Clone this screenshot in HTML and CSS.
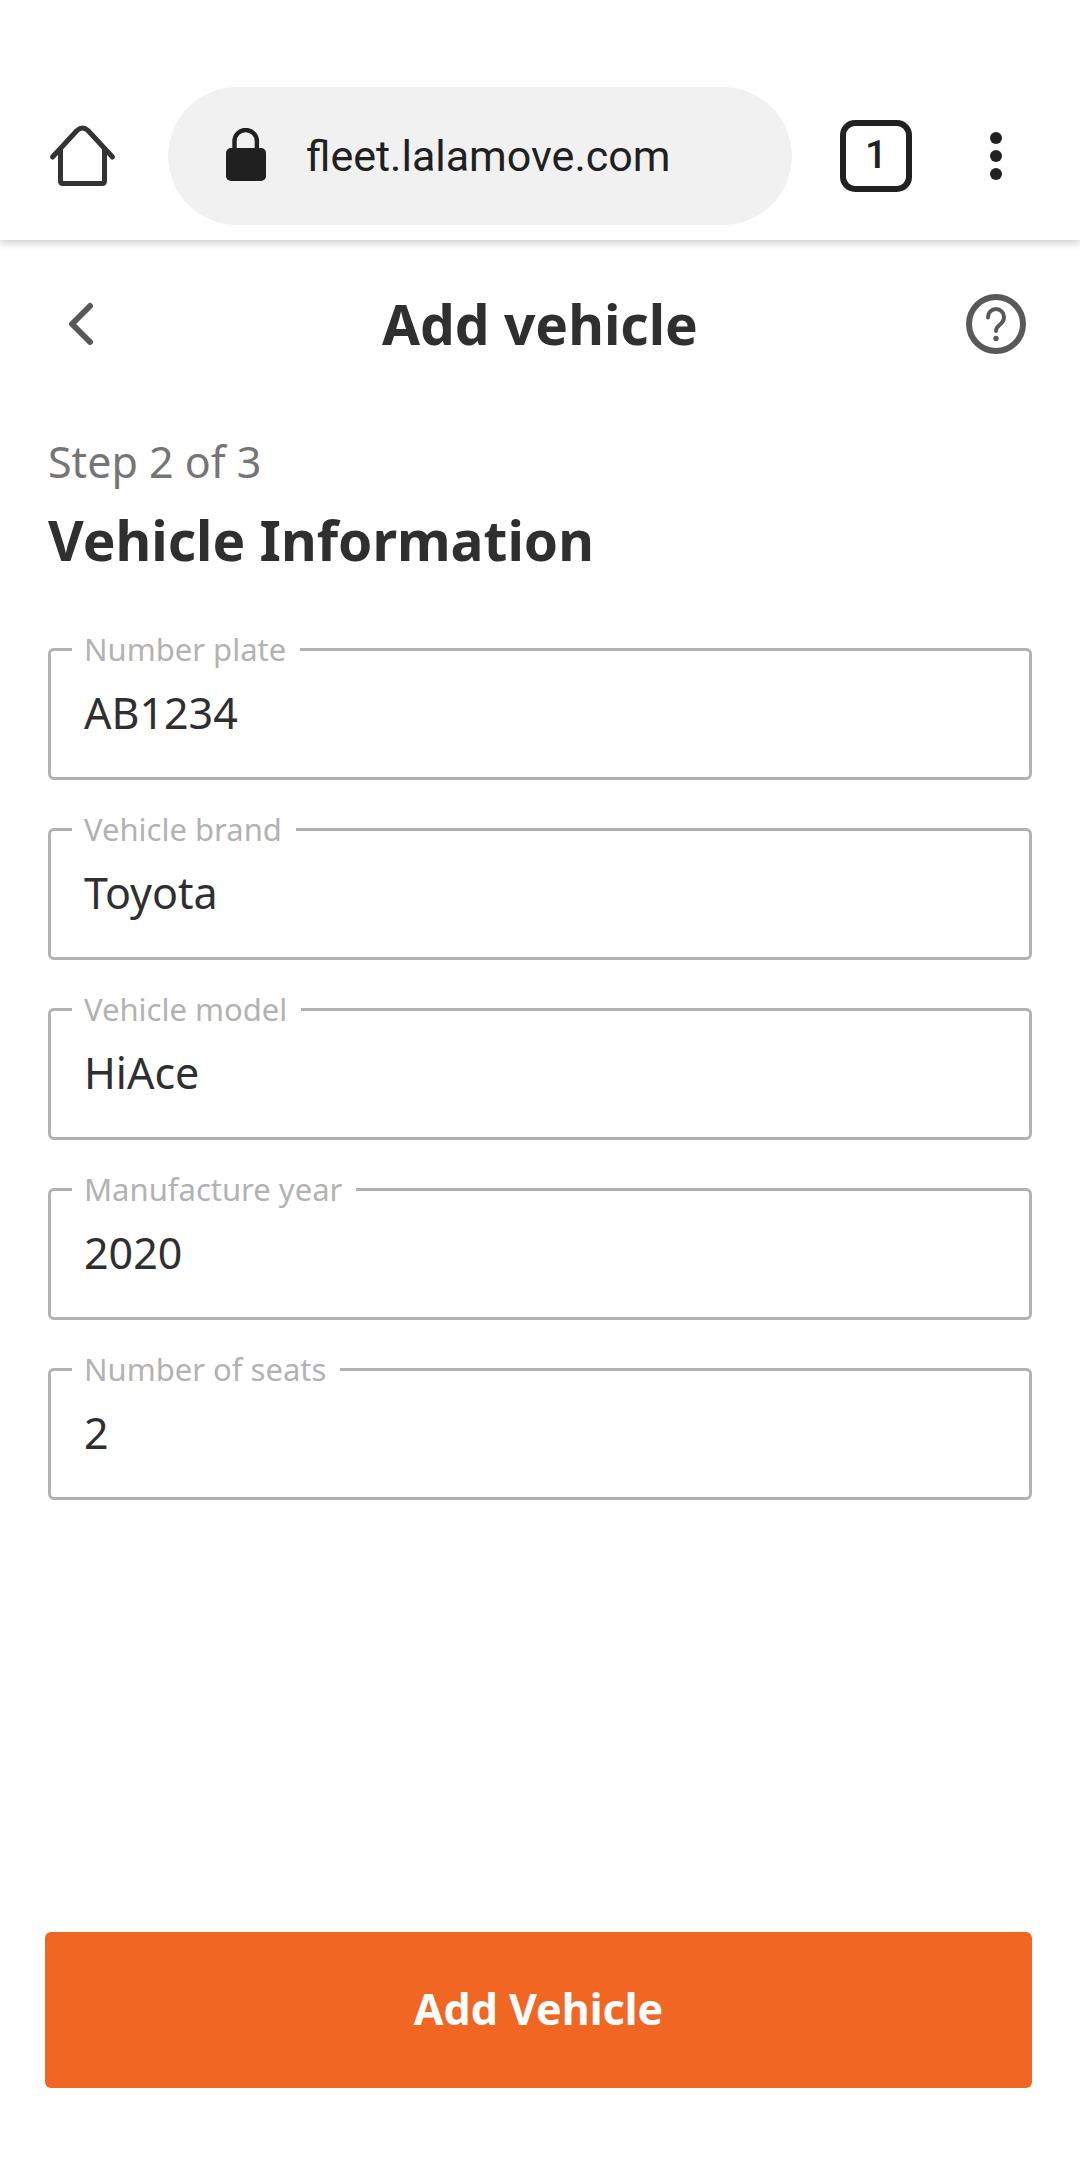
FILE: index.html
```html
<!DOCTYPE html>
<html lang="en">
    <head>
        <meta charset="utf-8">
        <meta name="viewport" content="width=device-width, initial-scale=1">
        <title>Add vehicle</title>
        <link rel="stylesheet" href="styles.css">
    </head>
    <body>
        <div class="page">
            <!-- browser bar -->
            <div class="browser-bar">
                <button type="button" class="icon-btn home-btn" aria-label="Home">
                    <svg width="72" height="72" viewBox="0 0 72 72" fill="none" stroke="#333" stroke-width="5" stroke-linecap="round" stroke-linejoin="round">
                        <path d="M6.500 37L31 10.500Q36.500 5.500 42 10.500L66.500 37"/>
                        <path d="M14.500 29V61Q14.500 63.500 17 63.500H56Q58.500 63.500 58.500 61V29"/>
                    </svg>
                </button>
                <div class="address">
                    <svg width="40" height="56" viewBox="0 0 40 56" aria-hidden="true">
                        <path d="M8.500 22V13.200a11.200 11.200 0 0 1 22.400 0V22" fill="none" stroke="#202020" stroke-width="4.400"/>
                        <rect x="0" y="20" width="40" height="33" rx="5" fill="#202020"/>
                    </svg>
                    <input type="text" class="address-input" aria-label="Address" value="fleet.lalamove.com">
                </div>
                <button type="button" class="tabs-btn" aria-label="Tabs">1</button>
                <button type="button" class="icon-btn menu-btn" aria-label="Menu">
                    <svg width="12" height="48" viewBox="0 0 12 48" fill="#212121">
                        <circle cx="6" cy="6" r="6"/>
                        <circle cx="6" cy="24" r="6"/>
                        <circle cx="6" cy="42" r="6"/>
                    </svg>
                </button>
            </div>

            <div class="title-bar">
                <button type="button" class="icon-btn" aria-label="Back">
                    <svg width="66" height="66" viewBox="0 0 66 66" fill="none" stroke="#595959" stroke-width="6" stroke-linecap="round" stroke-linejoin="round">
                        <path d="M39 15L21 33L39 51"/>
                    </svg>
                </button>
                <h1 class="title">Add vehicle</h1>
                <button type="button" class="icon-btn" aria-label="Help">
                    <svg width="66" height="66" viewBox="0 0 66 66" fill="none" stroke="#595959">
                        <circle cx="33" cy="33" r="27" stroke-width="6"/>
                        <path d="M25 26.500V26a8 8 0 0 1 16 0c0 4-2 6-4.500 8S33 37.500 33 40" stroke-width="4" stroke-linecap="round"/>
                        <circle cx="33" cy="47.500" r="2.700" fill="#595959" stroke="none"/>
                    </svg>
                </button>
            </div>

            <form class="vehicle-form">
                <p class="step">Step 2 of 3</p>
                <h2 class="heading">Vehicle Information</h2>

                <div class="fields">
                    <fieldset class="field">
                        <legend><label for="plate">Number plate</label></legend>
                        <input type="text" id="plate" value="AB1234">
                    </fieldset>
                    <fieldset class="field">
                        <legend><label for="brand">Vehicle brand</label></legend>
                        <input type="text" id="brand" value="Toyota">
                    </fieldset>
                    <fieldset class="field">
                        <legend><label for="model">Vehicle model</label></legend>
                        <input type="text" id="model" value="HiAce">
                    </fieldset>
                    <fieldset class="field">
                        <legend><label for="year">Manufacture year</label></legend>
                        <input type="text" id="year" value="2020">
                    </fieldset>
                    <fieldset class="field">
                        <legend><label for="seats">Number of seats</label></legend>
                        <input type="text" id="seats" value="2">
                    </fieldset>
                </div>

                <button type="submit" class="submit-btn">Add Vehicle</button>
            </form>
        </div>
    </body>
</html>
```
FILE: styles.css
```css
* {
    box-sizing: border-box;
}
body {
    margin: 0;
    background: #fff;
    color: #2f2f2f;
    font-family: "Noto Sans", sans-serif;
}
button,
input {
    font-family: inherit;
    color: inherit;
}
.page {
    min-height: 100vh;
    display: flex;
    flex-direction: column;
}

/* browser bar */
.browser-bar {
    display: flex;
    align-items: center;
    padding: 87px 48px 15px;
    box-shadow: 0 3px 8px rgba(0, 0, 0, 0.2);
}
.icon-btn {
    display: flex;
    flex: none;
    padding: 0;
    border: 0;
    background: none;
    cursor: pointer;
}
.home-btn {
    margin: 0 50px 0 -2px;
}
.address {
    flex: 1;
    min-width: 0;
    height: 138px;
    display: flex;
    align-items: center;
    gap: 40px;
    padding: 0 58px;
    border-radius: 69px;
    background: #f1f1f1;
}
.address svg {
    flex: none;
}
.address-input {
    flex: 1;
    min-width: 0;
    padding: 0;
    border: 0;
    outline: 0;
    background: none;
    color: #202020;
    font-family: Roboto, sans-serif;
    font-size: 43px;
}
.tabs-btn {
    flex: none;
    width: 72px;
    height: 72px;
    margin: 0 48px;
    padding: 0 0 2px;
    border: 6px solid #212121;
    border-radius: 15px;
    background: none;
    color: #212121;
    font-family: Roboto, sans-serif;
    font-size: 39px;
    font-weight: 500;
    line-height: 58px;
}
.menu-btn {
    padding: 0 30px;
}

/* title bar */
.title-bar {
    display: flex;
    align-items: center;
    justify-content: space-between;
    padding: 48px 51px;
}
.title {
    margin: 0;
    font-size: 55px;
    line-height: 72px;
}

/* form */
.vehicle-form {
    flex: 1;
    display: flex;
    flex-direction: column;
    padding: 24px 48px 72px;
}
.step {
    margin: 0 0 12px;
    color: #757575;
    font-size: 43px;
    line-height: 60px;
}
.heading {
    margin: 0 0 57px;
    font-size: 55px;
    line-height: 72px;
}
.fields {
    display: flex;
    flex-direction: column;
    gap: 33px;
    margin-bottom: 48px;
}
.field {
    min-width: 0;
    margin: 0;
    padding: 0 21px 18px;
    border: 3px solid #b2b2b2;
    border-radius: 6px;
}
.field legend {
    height: 33px;
    padding: 0 14px 0 12px;
    color: #b2b2b2;
    font-size: 31px;
    line-height: 32px;
}
.field input {
    display: block;
    width: 100%;
    height: 93px;
    padding: 0 12px;
    border: 0;
    outline: 0;
    background: none;
    font-size: 43px;
}
.submit-btn {
    height: 156px;
    margin: auto 0 0 -3px;
    padding: 0 0 4px;
    border: 0;
    border-radius: 6px;
    background: #f16622;
    color: #fff;
    font-size: 43px;
    font-weight: 700;
    cursor: pointer;
}
```
